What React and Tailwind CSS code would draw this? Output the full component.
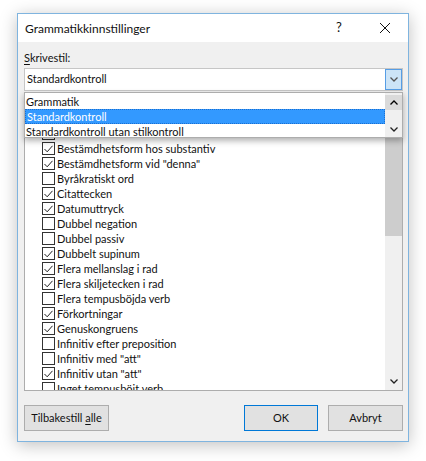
import React from 'react';

const items = [
    { label: 'Adjektivkongruens', checked: true },
    { label: 'Anglicismer', checked: false },
    { label: 'Bestämdhetsform efter "denna"', checked: true },
    { label: 'Bestämdhetsform hos substantiv', checked: true },
    { label: 'Bestämdhetsform vid "denna"', checked: true },
    { label: 'Byråkratiskt ord', checked: false },
    { label: 'Citattecken', checked: true },
    { label: 'Datumuttryck', checked: true },
    { label: 'Dubbel negation', checked: false },
    { label: 'Dubbel passiv', checked: false },
    { label: 'Dubbelt supinum', checked: true },
    { label: 'Flera mellanslag i rad', checked: true },
    { label: 'Flera skiljetecken i rad', checked: true },
    { label: 'Flera tempusböjda verb', checked: false },
    { label: 'Förkortningar', checked: true },
    { label: 'Genuskongruens', checked: true },
    { label: 'Infinitiv efter preposition', checked: false },
    { label: 'Infinitiv med "att"', checked: false },
    { label: 'Infinitiv utan "att"', checked: true },
    { label: 'Inget tempusböjt verb', checked: false },
    { label: 'Jämförelse', checked: false },
];

const styles = ['Grammatik', 'Standardkontroll', 'Standardkontroll utan stilkontroll'];

const Chevron = ({ up = false, className = '' }) => (
    <svg width="8" height="5" viewBox="0 0 8 5" className={className}>
        <path
            d={up ? 'M0.5 4.5 L4 1 L7.5 4.5' : 'M0.5 0.5 L4 4 L7.5 0.5'}
            fill="none"
            stroke="currentColor"
            strokeWidth="1.3"
        />
    </svg>
);

const CheckBox = ({ checked }) => (
    <div className="w-[13px] h-[13px] shrink-0 border border-[#333] bg-white flex items-center justify-center">
        {checked && (
            <svg width="9" height="8" viewBox="0 0 9 8">
                <path d="M0.5 4 L3.2 6.8 L8.5 0.8" fill="none" stroke="#222" strokeWidth="1" />
            </svg>
        )}
    </div>
);

const Button = ({ children, primary = false, className = '' }) => (
    <button
        className={`h-[26px] text-[11px] text-[#111] bg-[#e1e1e1] border whitespace-nowrap ${
            primary ? 'border-[#0078d7]' : 'border-[#adadad]'
        } ${className}`}
    >
        {children}
    </button>
);

export default function App() {
    return (
        <div className="w-[426px] h-[461px] bg-white pt-[13px] pl-[17px] font-['Lato','Noto_Sans',sans-serif]">
            <div className="w-[392px] h-[429px] border border-[#7fb4df] bg-[#f0f0f0] flex flex-col shadow-[0_3px_16px_rgba(0,0,0,0.25)]">
                {/* title bar */}
                <div className="h-[28px] bg-white flex items-center shrink-0">
                    <span className="pl-[7px] pt-[1px] text-[12px] text-[#111] flex-1">Grammatikkinnstillinger</span>
                    <div className="w-[46px] h-full flex items-center justify-center text-[13px] text-[#111]">?</div>
                    <div className="w-[46px] h-full flex items-center justify-center">
                        <svg width="10" height="10" viewBox="0 0 10 10">
                            <path d="M0 0 L10 10 M10 0 L0 10" stroke="#111" strokeWidth="1" />
                        </svg>
                    </div>
                </div>

                <div className="flex-1 flex flex-col pl-[6px] pr-[5px] text-[11px] text-[#111]">
                    <div className="h-[26px] pt-[9px] leading-[14px]">
                        <span className="underline underline-offset-2">S</span>krivestil:
                    </div>

                    {/* combobox */}
                    <div className="relative">
                        <div className="h-[23px] bg-white border border-[#c6c6c6] flex items-center">
                            <span className="flex-1 pl-[2px]">Standardkontroll</span>
                            <div className="w-[17px] h-[21px] bg-[#cce4f7] border border-[#569de5] flex items-center justify-center text-[#555]">
                                <Chevron />
                            </div>
                        </div>

                        {/* list of rules */}
                        <div className="mt-[4px] h-[296px] bg-white border border-[#adadad] flex overflow-hidden">
                            <div className="flex-1 overflow-hidden">
                                {items.map((item) => (
                                    <div key={item.label} className="h-[15px] flex items-center gap-[2px] pl-[17px]">
                                        <CheckBox checked={item.checked} />
                                        <span className="leading-[15px] whitespace-nowrap">{item.label}</span>
                                    </div>
                                ))}
                            </div>
                            <div className="w-[17px] bg-[#f0f0f0] flex flex-col">
                                <div className="h-[17px] flex items-center justify-center text-[#606060]">
                                    <Chevron up />
                                </div>
                                <div className="h-[123px] bg-[#cdcdcd]" />
                                <div className="flex-1" />
                                <div className="h-[17px] flex items-center justify-center text-[#222]">
                                    <Chevron />
                                </div>
                            </div>
                        </div>

                        {/* open dropdown */}
                        <div className="absolute left-0 right-0 top-[24px] h-[46px] bg-white border border-[#adadad] flex shadow-[0_3px_6px_rgba(0,0,0,0.3)]">
                            <div className="flex-1 pt-[1px]">
                                {styles.map((s, i) => (
                                    <div
                                        key={s}
                                        className={`h-[15px] pl-[1px] flex items-center leading-[15px] ${
                                            i === 1 ? 'bg-[#3399ff] text-white border border-[#1a6fd0] border-dotted' : ''
                                        }`}
                                    >
                                        {s}
                                    </div>
                                ))}
                            </div>
                            <div className="w-[17px] bg-[#f0f0f0] flex flex-col">
                                <div className="h-[15px] mt-[2px] bg-[#dadada] flex items-center justify-center text-[#000]">
                                    <Chevron up />
                                </div>
                                <div className="flex-1" />
                                <div className="h-[15px] flex items-center justify-center text-[#222]">
                                    <Chevron />
                                </div>
                            </div>
                        </div>
                    </div>

                    {/* buttons */}
                    <div className="mt-[14px] flex items-center">
                        <Button className="w-[85px]">
                            Tilbakestill <span className="underline underline-offset-2">a</span>lle
                        </Button>
                        <div className="flex-1" />
                        <Button primary className="w-[74px]">OK</Button>
                        <Button className="w-[75px] ml-[10px]">Avbryt</Button>
                    </div>
                </div>
            </div>
        </div>
    );
}
